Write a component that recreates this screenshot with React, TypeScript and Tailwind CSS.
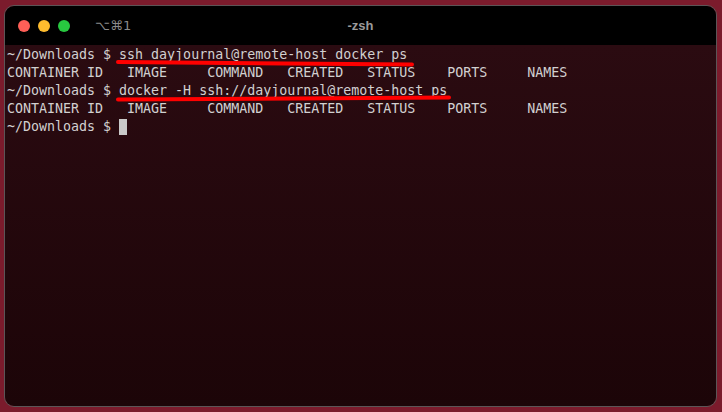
import React from 'react';

const lines = [
    {prompt: true, text: 'ssh dayjournal@remote-host docker ps'},
    {prompt: false, text: 'CONTAINER ID   IMAGE     COMMAND   CREATED   STATUS    PORTS     NAMES'},
    {prompt: true, text: 'docker -H ssh://dayjournal@remote-host ps'},
    {prompt: false, text: 'CONTAINER ID   IMAGE     COMMAND   CREATED   STATUS    PORTS     NAMES'},
];

function App() {
    return (
        <div className="relative w-[722px] h-[412px] bg-[#7b1b2c] pt-[5px] pb-[5px] pl-[4px] pr-[5px]">
            <div className="h-full rounded-[10px] border border-[#5c5557] overflow-hidden flex flex-col">
                {/* title bar */}
                <div className="relative h-[39px] bg-black flex items-center px-[13px] shrink-0">
                    <div className="flex gap-[8px]">
                        <span className="w-[12px] h-[12px] rounded-full bg-[#fe5f57]"/>
                        <span className="w-[12px] h-[12px] rounded-full bg-[#febc2e]"/>
                        <span className="w-[12px] h-[12px] rounded-full bg-[#28c840]"/>
                    </div>
                    <span className="ml-[25px] text-[13px] text-[#8a8a8a] font-['DejaVu_Sans',sans-serif]">⌥⌘1</span>
                    <span className="absolute left-0 right-0 text-center text-[13px] font-bold text-[#9b9b9b] font-['Liberation_Sans',sans-serif] pointer-events-none">-zsh</span>
                </div>
                {/* terminal body */}
                <div className="flex-1 bg-gradient-to-b from-[#2b0b11] to-[#1c0508] pt-[1px] pl-[2px] text-[13.3px] leading-[18px] text-[#d2d0d0] font-['DejaVu_Sans_Mono',monospace] whitespace-pre">
                    {lines.map((l, i) => (
                        <div key={i}>{l.prompt ? '~/Downloads $ ' : ''}{l.text}</div>
                    ))}
                    <div className="flex items-center">
                        <span>~/Downloads $ </span>
                        <span className="w-[8px] h-[16px] bg-[#c9c9c9]"/>
                    </div>
                </div>
            </div>
            {/* hand drawn underlines */}
            <svg className="absolute inset-0 pointer-events-none" width="722" height="412" viewBox="0 0 722 412">
                <path d="M118 62 Q 260 63 412 64.5" stroke="#ff0000" strokeWidth="4" strokeLinecap="round" fill="none"/>
                <path d="M118 99.5 Q 290 98.5 449 97.5" stroke="#ff0000" strokeWidth="4" strokeLinecap="round" fill="none"/>
            </svg>
        </div>
    );
}

export default App;
